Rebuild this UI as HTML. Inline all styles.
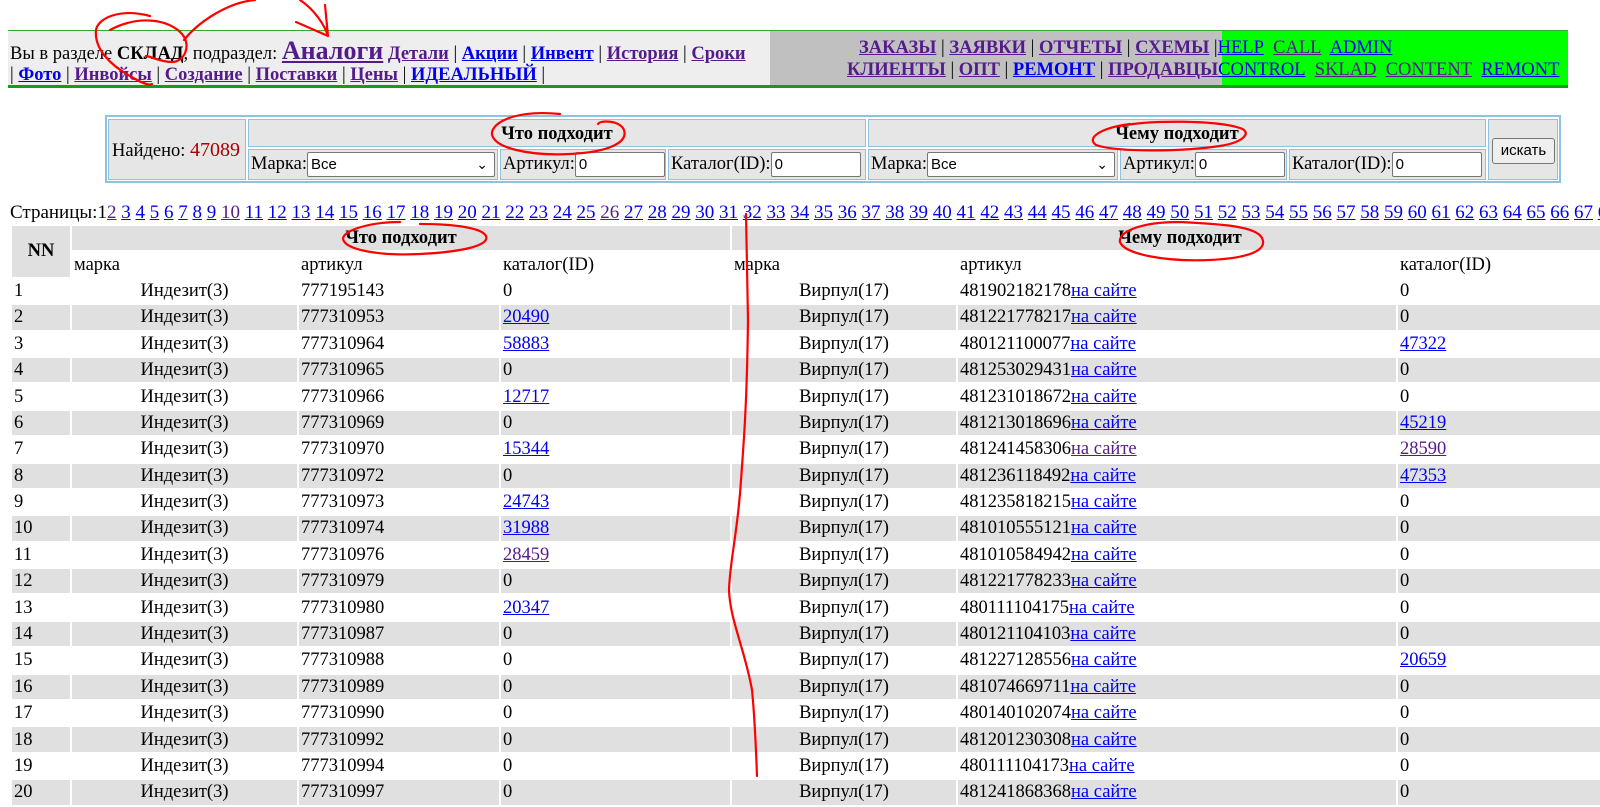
<!DOCTYPE html>
<html><head><meta charset="utf-8">
<style>
body{margin:0;width:1600px;height:807px;overflow:hidden;background:#fff;font-family:"Liberation Serif","DejaVu Serif",serif;font-size:18.5px;color:#000;position:relative}
a{color:#0000ee;text-decoration:underline}
a.v{color:#551a8b}
.top{position:absolute;left:8px;top:30px;width:1560px;height:54px;border-top:1px solid #3a3;border-bottom:3px solid #1a9a1a}
.tl{position:absolute;left:0;top:0;width:762px;height:54px;background:#eee}
.tm{position:absolute;left:762px;top:0;width:452px;height:54px;background:#c0c0c0}
.tr{position:absolute;left:1214px;top:0;width:346px;height:54px;background:#00ff00}
.bl a{font-weight:bold}
.bl a.n{font-weight:normal}
.ln{position:absolute;white-space:nowrap;line-height:22px}
.s{position:absolute;background:#e6e6e6;border:1px solid #8ec3dd;box-sizing:border-box;white-space:nowrap}
.inp{display:inline-block;background:#fff;border:1px solid #767676;border-radius:2px;height:25px;box-sizing:border-box;font-family:"Liberation Sans",sans-serif;font-size:15px;line-height:23px;padding-left:3px;vertical-align:middle}
table.d{position:absolute;left:10px;top:224px;border-spacing:2px;table-layout:fixed;width:1620px}
table.d td{padding:0 2px;height:24.4px;line-height:24px;white-space:nowrap;overflow:hidden}
tr.g td{background:#e0e0e0}
td.c{text-align:center}
</style></head><body>
<div class="top">
<div class="tl"></div><div class="tm"></div><div class="tr"></div>
<div class="ln bl" style="left:2px;top:9px">Вы в разделе <b>СКЛАД</b>, подраздел: <a class="v" style="font-size:26px">Аналоги</a> <a class="v">Детали</a> | <a>Акции</a> | <a>Инвент</a> | <a class="v">История</a> | <a class="v">Сроки</a></div>
<div class="ln bl" style="left:2px;top:33px">| <a>Фото</a> | <a class="v">Инвойсы</a> | <a class="v">Создание</a> | <a class="v">Поставки</a> | <a class="v">Цены</a> | <a>ИДЕАЛЬНЫЙ</a> |</div>
<div class="ln bl" style="left:851px;top:6px"><a class="v">ЗАКАЗЫ</a> | <a class="v">ЗАЯВКИ</a> | <a class="v">ОТЧЕТЫ</a> | <a class="v">СХЕМЫ</a> |<a class="n">HELP</a>&nbsp; <a class="v n">CALL</a>&nbsp; <a class="n">ADMIN</a></div>
<div class="ln bl" style="left:839px;top:28px"><a class="v">КЛИЕНТЫ</a> | <a class="v">ОПТ</a> | <a>РЕМОНТ</a> | <a class="v">ПРОДАВЦЫ</a><a class="n">CONTROL</a>&nbsp; <a class="v n">SKLAD</a>&nbsp; <a class="v n">CONTENT</a>&nbsp; <a class="n">REMONT</a></div>
</div>

<div class="s" style="left:105px;top:115px;width:1456px;height:68px;background:#fff;border:2px solid #8ec3dd"></div>
<div class="s" style="left:108px;top:119px;width:138px;height:61px;line-height:61px;padding-left:3px">Найдено: <span style="color:#a00;font-size:20px">47089</span></div>
<div class="s" style="left:248px;top:119px;width:618px;height:28px;text-align:center;line-height:28px;font-weight:bold">Что подходит</div>
<div class="s" style="left:248px;top:149px;width:250px;height:31px;line-height:29px;padding-left:2px">Марка:<span class="inp" style="width:188px;position:relative">Все<span style="position:absolute;right:6px;top:0;font-size:14px">&#8964;</span></span></div>
<div class="s" style="left:500px;top:149px;width:166px;height:31px;line-height:29px;padding-left:2px">Артикул:<span class="inp" style="width:90px">0</span></div>
<div class="s" style="left:668px;top:149px;width:198px;height:31px;line-height:29px;padding-left:2px">Каталог(ID):<span class="inp" style="width:90px">0</span></div>
<div class="s" style="left:868px;top:119px;width:618px;height:28px;text-align:center;line-height:28px;font-weight:bold">Чему подходит</div>
<div class="s" style="left:868px;top:149px;width:250px;height:31px;line-height:29px;padding-left:2px">Марка:<span class="inp" style="width:188px;position:relative">Все<span style="position:absolute;right:6px;top:0;font-size:14px">&#8964;</span></span></div>
<div class="s" style="left:1120px;top:149px;width:167px;height:31px;line-height:29px;padding-left:2px">Артикул:<span class="inp" style="width:90px">0</span></div>
<div class="s" style="left:1289px;top:149px;width:197px;height:31px;line-height:29px;padding-left:2px">Каталог(ID):<span class="inp" style="width:90px">0</span></div>
<div class="s" style="left:1488px;top:119px;width:70px;height:61px"><span style="position:absolute;left:3px;top:18px;width:63px;height:26px;border:1px solid #767676;border-radius:3px;background:#efefef;box-sizing:border-box;font-family:'Liberation Sans',sans-serif;font-size:15px;text-align:center;line-height:24px">искать</span></div>

<div class="ln" style="left:10px;top:202px;line-height:22px;font-size:19px">Страницы:1<a class="v">2</a> <a>3</a> <a>4</a> <a>5</a> <a>6</a> <a>7</a> <a>8</a> <a>9</a> <a class="v">10</a> <a>11</a> <a>12</a> <a>13</a> <a>14</a> <a>15</a> <a>16</a> <a>17</a> <a>18</a> <a>19</a> <a>20</a> <a>21</a> <a>22</a> <a>23</a> <a>24</a> <a>25</a> <a class="v">26</a> <a>27</a> <a>28</a> <a>29</a> <a>30</a> <a>31</a> <a>32</a> <a>33</a> <a>34</a> <a>35</a> <a>36</a> <a>37</a> <a>38</a> <a>39</a> <a>40</a> <a>41</a> <a>42</a> <a>43</a> <a>44</a> <a>45</a> <a>46</a> <a>47</a> <a>48</a> <a>49</a> <a>50</a> <a>51</a> <a>52</a> <a>53</a> <a>54</a> <a>55</a> <a>56</a> <a>57</a> <a>58</a> <a>59</a> <a>60</a> <a>61</a> <a>62</a> <a>63</a> <a>64</a> <a>65</a> <a>66</a> <a>67</a> <a>68</a></div>

<table class="d">
<colgroup><col style="width:58px"><col style="width:225px"><col style="width:200px"><col style="width:229px"><col style="width:224px"><col style="width:438px"><col style="width:230px"></colgroup>
<tr class="g"><td rowspan="2" style="text-align:center;font-weight:bold;background:#e0e0e0">NN</td><td colspan="3" class="c" style="font-weight:bold">Что подходит</td><td colspan="3" class="c" style="font-weight:bold">Чему подходит</td></tr>
<tr><td>марка</td><td>артикул</td><td>каталог(ID)</td><td>марка</td><td>артикул</td><td>каталог(ID)</td></tr>
<tr><td>1</td><td class="c">Индезит(3)</td><td>777195143</td><td>0</td><td class="c">Вирпул(17)</td><td>481902182178<a>на сайте</a></td><td>0</td></tr>
<tr class="g"><td>2</td><td class="c">Индезит(3)</td><td>777310953</td><td><a>20490</a></td><td class="c">Вирпул(17)</td><td>481221778217<a>на сайте</a></td><td>0</td></tr>
<tr><td>3</td><td class="c">Индезит(3)</td><td>777310964</td><td><a>58883</a></td><td class="c">Вирпул(17)</td><td>480121100077<a>на сайте</a></td><td><a>47322</a></td></tr>
<tr class="g"><td>4</td><td class="c">Индезит(3)</td><td>777310965</td><td>0</td><td class="c">Вирпул(17)</td><td>481253029431<a>на сайте</a></td><td>0</td></tr>
<tr><td>5</td><td class="c">Индезит(3)</td><td>777310966</td><td><a>12717</a></td><td class="c">Вирпул(17)</td><td>481231018672<a>на сайте</a></td><td>0</td></tr>
<tr class="g"><td>6</td><td class="c">Индезит(3)</td><td>777310969</td><td>0</td><td class="c">Вирпул(17)</td><td>481213018696<a>на сайте</a></td><td><a>45219</a></td></tr>
<tr><td>7</td><td class="c">Индезит(3)</td><td>777310970</td><td><a>15344</a></td><td class="c">Вирпул(17)</td><td>481241458306<a class="v">на сайте</a></td><td><a class="v">28590</a></td></tr>
<tr class="g"><td>8</td><td class="c">Индезит(3)</td><td>777310972</td><td>0</td><td class="c">Вирпул(17)</td><td>481236118492<a>на сайте</a></td><td><a>47353</a></td></tr>
<tr><td>9</td><td class="c">Индезит(3)</td><td>777310973</td><td><a>24743</a></td><td class="c">Вирпул(17)</td><td>481235818215<a>на сайте</a></td><td>0</td></tr>
<tr class="g"><td>10</td><td class="c">Индезит(3)</td><td>777310974</td><td><a>31988</a></td><td class="c">Вирпул(17)</td><td>481010555121<a>на сайте</a></td><td>0</td></tr>
<tr><td>11</td><td class="c">Индезит(3)</td><td>777310976</td><td><a class="v">28459</a></td><td class="c">Вирпул(17)</td><td>481010584942<a>на сайте</a></td><td>0</td></tr>
<tr class="g"><td>12</td><td class="c">Индезит(3)</td><td>777310979</td><td>0</td><td class="c">Вирпул(17)</td><td>481221778233<a>на сайте</a></td><td>0</td></tr>
<tr><td>13</td><td class="c">Индезит(3)</td><td>777310980</td><td><a>20347</a></td><td class="c">Вирпул(17)</td><td>480111104175<a>на сайте</a></td><td>0</td></tr>
<tr class="g"><td>14</td><td class="c">Индезит(3)</td><td>777310987</td><td>0</td><td class="c">Вирпул(17)</td><td>480121104103<a>на сайте</a></td><td>0</td></tr>
<tr><td>15</td><td class="c">Индезит(3)</td><td>777310988</td><td>0</td><td class="c">Вирпул(17)</td><td>481227128556<a>на сайте</a></td><td><a>20659</a></td></tr>
<tr class="g"><td>16</td><td class="c">Индезит(3)</td><td>777310989</td><td>0</td><td class="c">Вирпул(17)</td><td>481074669711<a>на сайте</a></td><td>0</td></tr>
<tr><td>17</td><td class="c">Индезит(3)</td><td>777310990</td><td>0</td><td class="c">Вирпул(17)</td><td>480140102074<a>на сайте</a></td><td>0</td></tr>
<tr class="g"><td>18</td><td class="c">Индезит(3)</td><td>777310992</td><td>0</td><td class="c">Вирпул(17)</td><td>481201230308<a>на сайте</a></td><td>0</td></tr>
<tr><td>19</td><td class="c">Индезит(3)</td><td>777310994</td><td>0</td><td class="c">Вирпул(17)</td><td>480111104173<a>на сайте</a></td><td>0</td></tr>
<tr class="g"><td>20</td><td class="c">Индезит(3)</td><td>777310997</td><td>0</td><td class="c">Вирпул(17)</td><td>481241868368<a>на сайте</a></td><td>0</td></tr>
</table>

<svg style="position:absolute;left:0;top:0" width="1600" height="807" fill="none" stroke="#f00" stroke-width="2.2" stroke-linecap="round">
<path d="M150 16 C120 8 98 18 96 30 C94 50 112 66 130 76 C140 82 148 86 152 84"/>
<path d="M110 30 C140 14 170 20 182 34 C192 46 184 62 172 62 C160 62 150 56 146 56"/>
<path d="M184 40 C200 20 230 2 255 0 M300 0 C315 10 325 26 328 36 M328 36 L325 5 M328 36 L296 22"/>
<path d="M560 114 C520 110 495 120 492 132 C490 148 530 156 570 154 C610 152 628 142 624 130 C620 120 600 120 598 124"/>
<path d="M1130 124 C1100 128 1086 138 1096 145 C1115 152 1180 152 1220 146 C1245 142 1252 132 1240 128 C1215 120 1150 120 1120 126"/>
<path d="M400 222 C370 222 345 230 343 238 C343 250 380 256 420 254 C460 252 490 246 486 236 C482 228 455 224 420 224"/>
<path d="M1180 222 C1140 222 1118 232 1120 242 C1124 254 1165 262 1210 260 C1250 258 1268 250 1262 238 C1256 226 1220 224 1180 222"/>
<path d="M746 214 L748 320 C747 400 744 440 741 480 C738 530 730 560 729 590 C730 620 745 650 752 690 C755 720 756 750 757 776"/>
</svg>
</body></html>
